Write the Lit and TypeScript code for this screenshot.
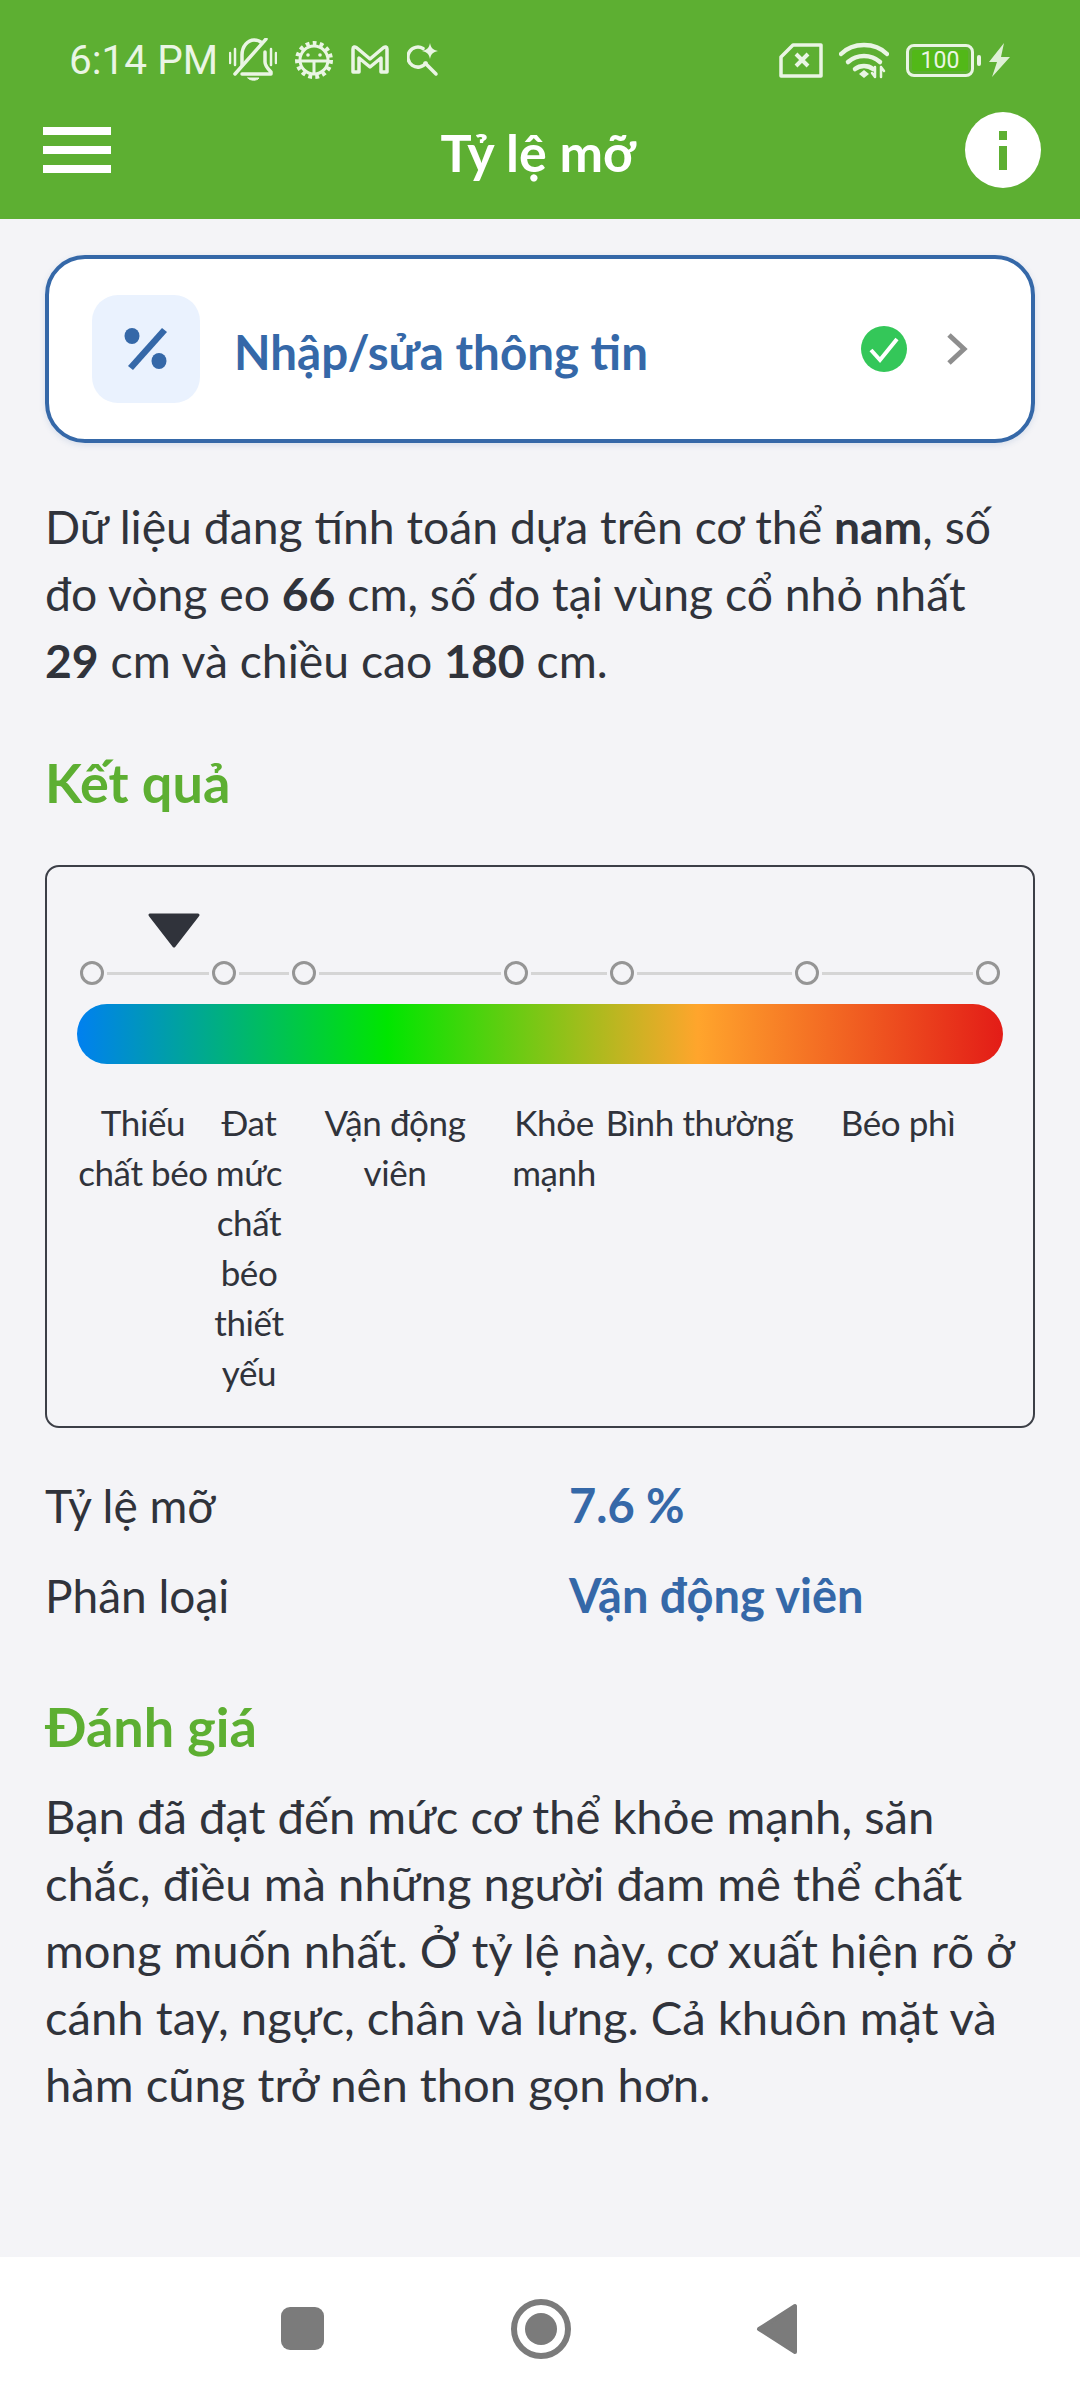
import { LitElement, html, css, svg } from "lit";
import { customElement } from "lit/decorators.js";

const GAPS = [132, 80, 212, 106, 185, 181];
const LABELS = [
  { lines: ["Thiếu", "chất béo"], width: 132 },
  { lines: ["Đat", "mức", "chất", "béo", "thiết", "yếu"], width: 80 },
  { lines: ["Vận động", "viên"], width: 212 },
  { lines: ["Khỏe", "mạnh"], width: 106 },
  { lines: ["Bình thường"], width: 185 },
  { lines: ["Béo phì"], width: 212 },
];
const POINTER_X = 70;

const bell = svg`<svg width="48" height="44" viewBox="0 0 48 44" fill="none" stroke="#eaf5e4" stroke-width="3.500" stroke-linecap="round" stroke-linejoin="round">
  <path d="M1 15v10M6 11v16M42 11v16M47 15v10" stroke-width="2.500"/>
  <path d="M13 27V17C13 8 19 2 25 2c3 0 6 1 8 3"/>
  <path d="M36 14v10c0 4 3 7 6 10v2H13"/>
  <path d="M37 1 6 36"/>
  <path d="M19 40h11c-2 3-9 3-11 0z" fill="#eaf5e4" stroke-width="1"/>
</svg>`;

const gear = svg`<svg width="38" height="38" viewBox="0 0 38 38" fill="none" stroke="#eaf5e4">
  <circle cx="19" cy="19" r="16" stroke-width="6" stroke-dasharray="3.600 3.100"/>
  <circle cx="19" cy="19" r="14" stroke-width="3" fill="#5daf32"/>
  <path d="M5 20h28M19 20v13" stroke-width="3"/>
  <circle cx="13" cy="14" r="1.800" fill="#eaf5e4" stroke="none"/>
  <circle cx="25" cy="14" r="1.800" fill="#eaf5e4" stroke="none"/>
</svg>`;

const gmail = svg`<svg width="38" height="30" viewBox="0 0 38 30" fill="none" stroke="#eaf5e4" stroke-width="3.500" stroke-linejoin="round">
  <path d="M2 4c0-2 2-3 4-1l13 11L32 3c2-2 4-1 4 1v23h-6V13L19 22 8 13v14H2z"/>
</svg>`;

const searchSpark = svg`<svg width="34" height="34" viewBox="0 0 34 34" fill="none" stroke="#eaf5e4" stroke-width="3.500" stroke-linecap="round">
  <path d="M16 5.500A10 10 0 1 0 19 20"/>
  <path d="M18 20l11 11"/>
  <path d="M23 0c1 5 3 7 8 8-5 1-7 3-8 8-1-5-3-7-8-8 5-1 7-3 8-8z" fill="#eaf5e4" stroke="none"/>
</svg>`;

const sim = svg`<svg width="44" height="35" viewBox="0 0 44 35" fill="none" stroke="#eaf5e4" stroke-width="3.500" stroke-linejoin="round">
  <path d="M14 2h28v31H2V14z"/>
  <path d="M17 11l12 12M29 11 17 23" stroke-width="4"/>
</svg>`;

const wifi = svg`<svg width="50" height="38" viewBox="0 0 50 38" fill="none" stroke="#eaf5e4" stroke-width="4.500" stroke-linecap="round">
  <path d="M2 13C14 1 36 1 48 13"/>
  <path d="M9 21c9-8 23-8 32 0"/>
  <path d="M16 28c5-4 13-4 18 0"/>
  <path d="M20 33l5-4 5 4-5 4z" fill="#eaf5e4" stroke="none"/>
  <path d="M36 26v10M36 36l-3-4M42 36V26M42 26l3 4" stroke-width="2.500"/>
</svg>`;

const bolt = svg`<svg width="22" height="34" viewBox="0 0 22 34"><path d="M15 0 0 19h8L3 34 21 14h-9z" fill="#dff0d6"/></svg>`;

const percent = svg`<svg width="44" height="44" viewBox="0 0 44 44" fill="#3568a8">
  <ellipse cx="8" cy="9" rx="7.500" ry="8"/>
  <ellipse cx="35" cy="34" rx="7.500" ry="8"/>
  <path d="M38 1l5 4L9 43l-5-4z"/>
</svg>`;

const tick = svg`<svg width="46" height="46" viewBox="0 0 46 46">
  <circle cx="23" cy="23" r="23" fill="#34c759"/>
  <path d="M10 24l9 10 17-21" fill="none" stroke="#fff" stroke-width="4"/>
</svg>`;

const chevron = svg`<svg class="chevron" width="22" height="34" viewBox="0 0 22 34"><path d="M3 3l15 14L3 31" fill="none" stroke="#8e8e8e" stroke-width="5"/></svg>`;

const pointer = svg`<svg width="54" height="36" viewBox="0 0 54 36"><path d="M3 2h48L27 33z" fill="#30333b" stroke="#30333b" stroke-width="3" stroke-linejoin="round"/></svg>`;

@customElement("app-root")
export class AppRoot extends LitElement {
  static styles = css`
    :host {
      display: flex;
      flex-direction: column;
      width: 1080px;
      height: 2400px;
      background: #f4f4f7;
      color: #30333b;
      font-family: Lato, "Noto Sans", sans-serif;
      font-size: 47px;
    }
    .top {
      height: 219px;
      background: #5daf32;
      flex: none;
    }
    .status {
      height: 60px;
      padding: 30px 69px 0 69px;
      display: flex;
      align-items: center;
      color: #eaf5e4;
    }
    .time {
      font-family: Roboto, sans-serif;
      font-size: 40.500px;
      width: 160px;
    }
    .status-left {
      display: flex;
      align-items: center;
      gap: 18px;
    }
    .status-right {
      margin-left: auto;
      display: flex;
      align-items: center;
    }
    .battery {
      width: 68px;
      height: 33px;
      box-sizing: border-box;
      border: 3px solid #eaf5e4;
      border-radius: 8px;
      margin: 0 3px 0 17px;
      padding: 3px;
      display: flex;
    }
    .battery span {
      flex: 1;
      background: #52b818;
      border-radius: 2px;
      font-family: Roboto, sans-serif;
      font-size: 23px;
      line-height: 21px;
      text-align: center;
      color: #eaf5e4;
    }
    .nub {
      width: 4px;
      height: 11px;
      background: #eaf5e4;
      border-radius: 2px;
      margin-right: 8px;
    }
    .toolbar {
      height: 120px;
      padding: 0 39px 0 43px;
      display: flex;
      align-items: center;
      justify-content: space-between;
    }
    .menu {
      width: 68px;
      display: flex;
      flex-direction: column;
      gap: 11px;
    }
    .menu i {
      height: 8px;
      background: #fff;
    }
    .title {
      color: #fff;
      font-size: 52px;
      font-weight: 700;
      padding-top: 3px;
    }
    .info {
      width: 76px;
      height: 76px;
      border-radius: 50%;
      background: #fff;
      display: flex;
      flex-direction: column;
      align-items: center;
      justify-content: center;
      gap: 6px;
    }
    .info i {
      width: 8px;
      background: #5daf32;
    }
    .info .dot {
      height: 9px;
    }
    .info .stem {
      height: 24px;
    }
    main {
      flex: 1;
      padding: 36px 45px 0;
    }
    .edit {
      height: 188px;
      box-sizing: border-box;
      background: #fff;
      border: 4px solid #3568a8;
      border-radius: 40px;
      box-shadow: 0 2px 6px rgba(53, 104, 168, 0.15);
      padding: 0 63px 0 43px;
      display: flex;
      align-items: center;
    }
    .edit-icon {
      width: 108px;
      height: 108px;
      border-radius: 26px;
      background: #eaf2fe;
      display: flex;
      align-items: center;
      justify-content: center;
      margin-right: 34px;
    }
    .edit-text {
      flex: 1;
      color: #3568a8;
      font-size: 47.500px;
      font-weight: 700;
      padding-top: 4px;
    }
    .chevron {
      margin-left: 39px;
    }
    p {
      margin: 0;
      line-height: 67px;
      white-space: nowrap;
    }
    .intro {
      margin-top: 50px;
      font-size: 46.300px;
    }
    .intro b {
      font-weight: 700;
    }
    h2 {
      margin: 0;
      color: #5daf32;
      font-size: 54px;
      line-height: 70px;
      font-weight: 700;
    }
    .result {
      margin-top: 54px;
    }
    .chart {
      margin-top: 47px;
      height: 563px;
      box-sizing: border-box;
      border: 2px solid #3c3f47;
      border-radius: 14px;
      padding: 94px 30px 0;
    }
    .scale {
      position: relative;
      height: 24px;
      padding-left: 3px;
      display: flex;
      align-items: center;
    }
    .pointer {
      position: absolute;
      top: -48px;
      line-height: 0;
    }
    .seg {
      flex: none;
      display: flex;
      align-items: center;
    }
    .seg i {
      flex: none;
      width: 24px;
      height: 24px;
      box-sizing: border-box;
      border: 3px solid #959595;
      border-radius: 50%;
    }
    .seg u {
      flex: 1;
      height: 3px;
      margin: 0 3px;
      background: #d5d5d5;
    }
    .bar {
      margin-top: 19px;
      height: 60px;
      border-radius: 30px;
      background: linear-gradient(90deg, #0080f0, #00e600 33.5%, #ffa52c 67%, #e31c17);
    }
    .labels {
      margin-top: 33px;
      display: flex;
      font-size: 35px;
      letter-spacing: -0.400px;
      line-height: 50px;
      white-space: nowrap;
    }
    .label {
      flex: none;
      display: flex;
      flex-direction: column;
      align-items: center;
    }
    .rows {
      margin-top: 32px;
    }
    .row {
      height: 90px;
      display: flex;
      align-items: center;
    }
    .row span:first-child {
      width: 524px;
      font-size: 46px;
    }
    .row span:last-child {
      color: #3568a8;
      font-weight: 700;
    }
    .review {
      margin-top: 52px;
    }
    .review-text {
      margin-top: 20px;
      font-size: 47.200px;
    }
    nav {
      flex: none;
      height: 143px;
      background: #fff;
      display: flex;
      align-items: center;
      padding: 0 0 0 281px;
      box-sizing: border-box;
    }
    .square {
      width: 43px;
      height: 43px;
      border-radius: 9px;
      background: #7b7b7b;
      margin-right: 187px;
    }
    .home {
      width: 60px;
      height: 60px;
      box-sizing: border-box;
      border: 6px solid #7b7b7b;
      border-radius: 50%;
      display: flex;
      align-items: center;
      justify-content: center;
      margin-right: 185px;
    }
    .home i {
      width: 32px;
      height: 32px;
      border-radius: 50%;
      background: #7b7b7b;
    }
  `;

  render() {
    return html`
      <div class="top">
        <div class="status">
          <span class="time">6:14 PM</span>
          <div class="status-left">${bell}${gear}${gmail}${searchSpark}</div>
          <div class="status-right">
            ${sim}
            <span style="width:16px"></span>
            ${wifi}
            <div class="battery"><span>100</span></div>
            <div class="nub"></div>
            ${bolt}
          </div>
        </div>
        <div class="toolbar">
          <div class="menu"><i></i><i></i><i></i></div>
          <div class="title">Tỷ lệ mỡ</div>
          <div class="info"><i class="dot"></i><i class="stem"></i></div>
        </div>
      </div>
      <main>
        <div class="edit">
          <div class="edit-icon">${percent}</div>
          <div class="edit-text">Nhập/sửa thông tin</div>
          ${tick}${chevron}
        </div>
        <p class="intro">
          Dữ liệu đang tính toán dựa trên cơ thể <b>nam</b>, số<br />
          đo vòng eo <b>66</b> cm, số đo tại vùng cổ nhỏ nhất<br />
          <b>29</b> cm và chiều cao <b>180</b> cm.
        </p>
        <h2 class="result">Kết quả</h2>
        <div class="chart">
          <div class="scale">
            <div class="pointer" style="left:${POINTER_X}px">${pointer}</div>
            ${GAPS.map((g) => html`<div class="seg" style="width:${g}px"><i></i><u></u></div>`)}
            <div class="seg"><i></i></div>
          </div>
          <div class="bar"></div>
          <div class="labels">
            ${LABELS.map(
              (l) => html`<div class="label" style="width:${l.width}px">
                ${l.lines.map((t) => html`<span>${t}</span>`)}
              </div>`
            )}
          </div>
        </div>
        <div class="rows">
          <div class="row"><span>Tỷ lệ mỡ</span><span>7.6 %</span></div>
          <div class="row"><span>Phân loại</span><span>Vận động viên</span></div>
        </div>
        <h2 class="review">Đánh giá</h2>
        <p class="review-text">
          Bạn đã đạt đến mức cơ thể khỏe mạnh, săn<br />
          chắc, điều mà những người đam mê thể chất<br />
          mong muốn nhất. Ở tỷ lệ này, cơ xuất hiện rõ ở<br />
          cánh tay, ngực, chân và lưng. Cả khuôn mặt và<br />
          hàm cũng trở nên thon gọn hơn.
        </p>
      </main>
      <nav>
        <div class="square"></div>
        <div class="home"><i></i></div>
        <svg width="42" height="52" viewBox="0 0 42 52"><path d="M39 3v46L3 26z" fill="#7b7b7b" stroke="#7b7b7b" stroke-width="4" stroke-linejoin="round"/></svg>
      </nav>
    `;
  }
}
